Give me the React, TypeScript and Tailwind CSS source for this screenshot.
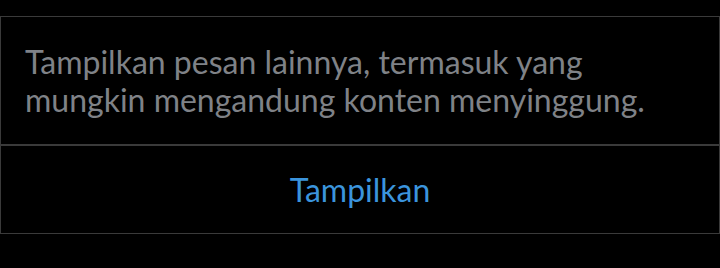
export default function App() {
  return (
    <div className="w-[720px] h-[268px] bg-black pt-[16px]" style={{ fontFamily: "Lato, 'Noto Sans', sans-serif" }}>
      <div className="border border-[#3a3a3a] w-[720px] flex flex-col">
        <div className="h-[129px] px-[24px] flex items-center border-b-2 border-[#3a3a3a]">
          <p className="text-[32px] leading-[38px] text-[#7f8287]">
            Tampilkan pesan lainnya, termasuk yang
            <br />
            mungkin mengandung konten menyinggung.
          </p>
        </div>
        <div className="h-[87px] flex items-center justify-center">
          <span className="text-[32px] text-[#3b94dc]">Tampilkan</span>
        </div>
      </div>
    </div>
  );
}
